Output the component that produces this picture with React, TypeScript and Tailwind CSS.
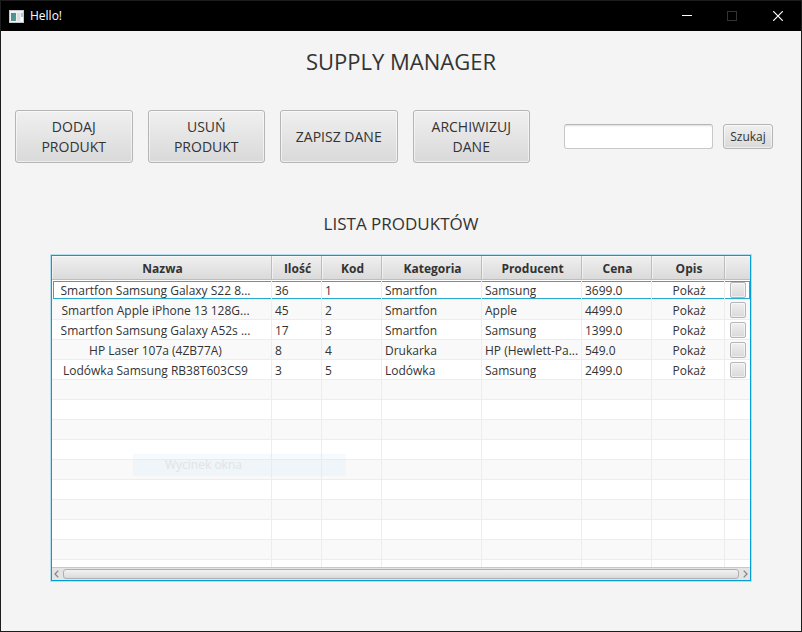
import type { ReactNode } from "react";

type Product = {
  name: string;
  amount: string;
  code: string;
  category: string;
  producer: string;
  price: string;
};

const products: Product[] = [
  { name: "Smartfon Samsung Galaxy S22 8...", amount: "36", code: "1", category: "Smartfon", producer: "Samsung", price: "3699.0" },
  { name: "Smartfon Apple iPhone 13 128G...", amount: "45", code: "2", category: "Smartfon", producer: "Apple", price: "4499.0" },
  { name: "Smartfon Samsung Galaxy A52s ...", amount: "17", code: "3", category: "Smartfon", producer: "Samsung", price: "1399.0" },
  { name: "HP Laser 107a (4ZB77A)", amount: "8", code: "4", category: "Drukarka", producer: "HP (Hewlett-Pa...", price: "549.0" },
  { name: "Lodówka Samsung RB38T603CS9", amount: "3", code: "5", category: "Lodówka", producer: "Samsung", price: "2499.0" },
];

const headers = ["Nazwa", "Ilość", "Kod", "Kategoria", "Producent", "Cena", "Opis", ""];
const emptyRows = [0, 1, 2, 3, 4, 5, 6, 7, 8];

const raised =
  "border border-[#b5b5b5] bg-linear-to-b from-[#f0f0f0] to-[#d9d9d9] shadow-[inset_0_0_0_1px_rgba(255,255,255,0.55)]";

function TitleBar() {
  return (
    <header className="flex h-[30px] items-center bg-black pl-2 text-white">
      <svg width="15" height="13" viewBox="0 0 15 13" shapeRendering="crispEdges" aria-hidden="true">
        <defs>
          <linearGradient id="pane" x1="0" y1="0" x2="1" y2="1">
            <stop offset="0" stopColor="#4f83a8" />
            <stop offset="1" stopColor="#4fa37c" />
          </linearGradient>
        </defs>
        <rect width="15" height="13" fill="#c3c8cc" />
        <rect x="1" y="1" width="13" height="11" fill="#eef0f1" />
        <rect x="2" y="3" width="5" height="8" fill="url(#pane)" />
        <rect x="8" y="3" width="3" height="8" fill="#dcdfe2" />
        <rect x="12" y="3" width="2" height="4" fill="#a9cdd0" />
        <rect x="12" y="7" width="2" height="4" fill="#ffffff" />
      </svg>
      <span className="ml-1.5 flex-1 text-xs">Hello!</span>
      <button type="button" aria-label="Minimalizuj" className="flex h-full w-[45px] items-center justify-center">
        <svg width="10" height="10" viewBox="0 0 10 10" shapeRendering="crispEdges">
          <path d="M0 4.5h10" stroke="#fff" />
        </svg>
      </button>
      <button type="button" aria-label="Maksymalizuj" disabled className="flex h-full w-[45px] items-center justify-center">
        <svg width="10" height="10" viewBox="0 0 10 10" shapeRendering="crispEdges">
          <rect x="0.5" y="0.5" width="9" height="9" fill="none" stroke="#333" />
        </svg>
      </button>
      <button type="button" aria-label="Zamknij" className="flex h-full w-[47px] items-center justify-center">
        <svg width="10" height="10" viewBox="0 0 10 10">
          <path d="M0.2 0.2l9.6 9.6M9.8 0.2l-9.6 9.6" stroke="#fff" strokeWidth="1.2" />
        </svg>
      </button>
    </header>
  );
}

function ActionButton({ children }: { children: ReactNode }) {
  return (
    <button type="button" className={`h-[53px] rounded-[3px] px-3 text-sm leading-5 ${raised}`}>
      {children}
    </button>
  );
}

function Cell({ children, focused, className = "" }: { children?: ReactNode; focused: boolean; className?: string }) {
  return (
    <td className="h-5 border-r border-b border-[#ededed] p-0 last:border-r-0">
      <div
        className={`mt-px flex h-[18px] items-center border-y ${focused ? "border-[#2ba9cf]" : "border-transparent"} ${className}`}
      >
        {children}
      </div>
    </td>
  );
}

function TextCell({ children, focused }: { children: ReactNode; focused: boolean }) {
  return (
    <Cell focused={focused} className="pt-0.5 pl-[3px] leading-4 whitespace-nowrap">
      {children}
    </Cell>
  );
}

function ClippedCell({ children, focused }: { children: ReactNode; focused: boolean }) {
  return (
    <Cell focused={focused} className="pt-0.5 pl-[3px]">
      <span className="overflow-hidden leading-[14px] whitespace-nowrap">{children}</span>
    </Cell>
  );
}

function ProductTable() {
  return (
    <section
      aria-label="Lista produktów"
      className="relative mx-[50px] mt-[19px] border border-[#039ed3] bg-white text-xs shadow-[0_0_0_1px_#b5dfec]"
    >
      <table className="w-full table-fixed border-separate border-spacing-0">
        <colgroup>
          <col />
          <col className="w-[50px]" />
          <col className="w-[60px]" />
          <col className="w-[100px]" />
          <col className="w-[100px]" />
          <col className="w-[70px]" />
          <col className="w-[73px]" />
          <col className="w-[25px]" />
        </colgroup>
        <thead>
          <tr>
            {headers.map((label, i) => (
              <th
                key={i}
                scope="col"
                className="h-6 border-r border-b border-[#bdbdbd] bg-linear-to-b from-[#f0f0f0] to-[#dadada] p-0 pt-0.5 pl-0.5 leading-4 font-bold shadow-[inset_1px_1px_0_rgba(255,255,255,0.5)] last:border-r-0"
              >
                {label}
              </th>
            ))}
          </tr>
        </thead>
        <tbody>
          {products.map((p, i) => {
            const focused = i === 0;
            return (
              <tr key={p.code} className="odd:bg-white even:bg-[#f9f9f9]">
                <Cell focused={focused} className="ml-px justify-center border-l pt-0.5 pr-3.5 leading-4 whitespace-nowrap">
                  {p.name}
                </Cell>
                <TextCell focused={focused}>{p.amount}</TextCell>
                <TextCell focused={focused}>{p.code}</TextCell>
                <TextCell focused={focused}>{p.category}</TextCell>
                <ClippedCell focused={focused}>{p.producer}</ClippedCell>
                <TextCell focused={focused}>{p.price}</TextCell>
                <Cell focused={focused} className="justify-center pt-0.5 pl-0.5 leading-4">
                  <button type="button">Pokaż</button>
                </Cell>
                <Cell focused={focused} className="justify-center border-r pl-0.5">
                  <input
                    type="checkbox"
                    aria-label={`Zaznacz ${p.name}`}
                    className={`size-4 shrink-0 appearance-none rounded-[2px] ${raised}`}
                  />
                </Cell>
              </tr>
            );
          })}
          {emptyRows.map((r) => (
            <tr key={r} className="odd:bg-white even:bg-[#f9f9f9]">
              {headers.map((_, c) => (
                <td key={c} className="h-5 border-r border-b border-[#ededed] p-0 last:border-r-0" />
              ))}
            </tr>
          ))}
          <tr>
            {headers.map((_, c) => (
              <td key={c} className="h-[7px] border-r border-[#ededed] p-0 last:border-r-0" />
            ))}
          </tr>
        </tbody>
      </table>
      <div className="flex h-[13px] items-center border-t border-[#c8c8c8] bg-[#e4e4e4] px-[2px]">
        <svg width="5" height="8" viewBox="0 0 5 8" fill="none" stroke="#868686" strokeWidth="1.3" aria-hidden="true">
          <path d="M4.3 0.6L1 4l3.3 3.4" />
        </svg>
        <div className="mx-1 h-[10px] flex-1 rounded-[3px] border border-[#b0b0b0] bg-linear-to-b from-[#f2f2f2] to-[#dadada]" />
        <svg width="5" height="8" viewBox="0 0 5 8" fill="none" stroke="#868686" strokeWidth="1.3" aria-hidden="true">
          <path d="M0.7 0.6L4 4L0.7 7.4" />
        </svg>
      </div>
      <div className="pointer-events-none absolute top-[198px] left-[81px] flex h-[22px] w-[213px] items-center bg-[#d2ebfa]/25 pl-8 text-[#e2e3e4]">
        Wycinek okna
      </div>
    </section>
  );
}

export default function App() {
  return (
    <div className="flex min-h-screen flex-col border border-[#1c1c1c] bg-[#f4f4f4] font-['Open_Sans','Noto_Sans',sans-serif] text-[#333]">
      <TitleBar />
      <main className="flex-1 pb-[50px]">
        <h1 className="mt-[14px] text-center text-[22px] leading-8">SUPPLY MANAGER</h1>
        <div className="mt-[33px] flex items-center pr-7 pl-[14px]">
          <div className="grid flex-1 grid-cols-4 gap-[15px]">
            <ActionButton>DODAJ PRODUKT</ActionButton>
            <ActionButton>USUŃ PRODUKT</ActionButton>
            <ActionButton>ZAPISZ DANE</ActionButton>
            <ActionButton>ARCHIWIZUJ DANE</ActionButton>
          </div>
          <form className="ml-[34px] flex gap-[10px]" onSubmit={(e) => e.preventDefault()}>
            <input
              type="text"
              aria-label="Szukaj produktu"
              className="h-[25px] w-[149px] rounded-[3px] border border-[#c8c8c8] border-t-[#b5b5b5] bg-white px-2 text-xs shadow-[inset_0_2px_2px_-1px_#dedede]"
            />
            <button type="submit" className={`h-[25px] w-[50px] rounded-[3px] text-xs ${raised}`}>
              Szukaj
            </button>
          </form>
        </div>
        <h2 className="mt-[49px] text-center text-[17px] leading-6">LISTA PRODUKTÓW</h2>
        <ProductTable />
      </main>
    </div>
  );
}
